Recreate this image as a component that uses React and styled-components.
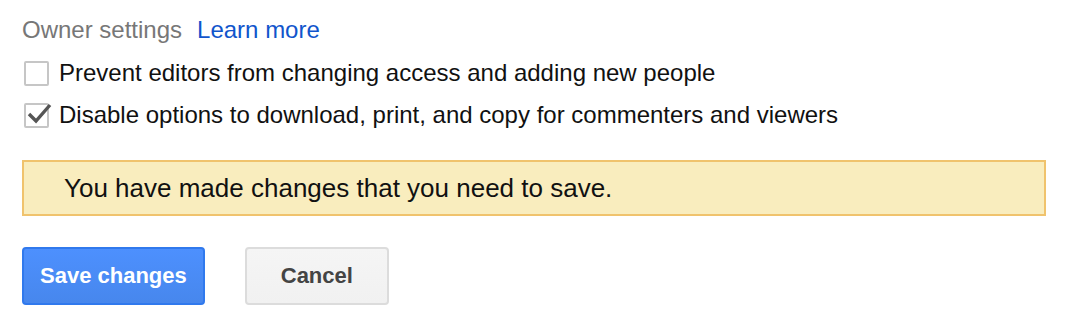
import React, { useState } from "react";
import styled, { createGlobalStyle } from "styled-components";

const GlobalStyle = createGlobalStyle`
	body {
		margin: 0;
		background: #ffffff;
		font-family: "Liberation Sans", Arial, sans-serif;
	}
`;

const Page = styled.div`
	padding: 14px 20px 0 22px;
`;

const Heading = styled.div`
	display: flex;
	align-items: baseline;
	gap: 15px;
	font-size: 24px;
	height: 32px;
	line-height: 32px;
`;

const HeadingLabel = styled.span`
	color: #777777;
`;

const LearnMore = styled.a`
	color: #1155cc;
	text-decoration: none;
	cursor: pointer;
`;

const OptionList = styled.div`
	display: flex;
	flex-direction: column;
	gap: 16px;
	margin-top: 14px;
`;

const Option = styled.label`
	display: flex;
	align-items: center;
	gap: 10px;
	font-size: 24px;
	color: #111111;
	height: 26px;
	cursor: pointer;
`;

const Box = styled.span`
	position: relative;
	width: 21px;
	height: 21px;
	margin-left: 2px;
	border: 2px solid #c6c6c6;
	border-radius: 2px;
	background: #ffffff;
	flex-shrink: 0;
`;

const Tick = styled.svg`
	position: absolute;
	left: -1px;
	top: -6px;
`;

const Notice = styled.div`
	margin-top: 32px;
	height: 56px;
	width: 1024px;
	box-sizing: border-box;
	display: flex;
	align-items: center;
	padding-left: 40px;
	background: #f9edbe;
	border: 2px solid #f0c36d;
	font-size: 26px;
	color: #111111;
`;

const Actions = styled.div`
	display: flex;
	gap: 40px;
	margin-top: 31px;
`;

const Button = styled.button`
	height: 58px;
	padding: 0 ${(p) => (p.$primary ? "16px" : "34px")};
	font-family: "Liberation Sans", Arial, sans-serif;
	font-size: 22px;
	font-weight: bold;
	border-radius: 4px;
	cursor: pointer;
	border: 2px solid ${(p) => (p.$primary ? "#3079ed" : "#dcdcdc")};
	color: ${(p) => (p.$primary ? "#ffffff" : "#444444")};
	background: ${(p) =>
		p.$primary
			? "linear-gradient(#4d90fe, #4787ed)"
			: "linear-gradient(#f5f5f5, #f1f1f1)"};
`;

function Checkbox({ checked, onChange, children }) {
	return (
		<Option onClick={onChange}>
			<Box>
				{checked && (
					<Tick width="28" height="28" viewBox="0 0 28 28">
						<path
							d="M4 15 L11 22 L25 6"
							fill="none"
							stroke="#555555"
							strokeWidth="3.4"
							strokeLinecap="butt"
						/>
					</Tick>
				)}
			</Box>
			{children}
		</Option>
	);
}

export default function App() {
	const [preventEditors, setPreventEditors] = useState(false);
	const [disableDownload, setDisableDownload] = useState(true);

	return (
		<>
			<GlobalStyle />
			<Page>
				<Heading>
					<HeadingLabel>Owner settings</HeadingLabel>
					<LearnMore>Learn more</LearnMore>
				</Heading>

				<OptionList>
					<Checkbox
						checked={preventEditors}
						onChange={() => setPreventEditors(!preventEditors)}
					>
						Prevent editors from changing access and adding new people
					</Checkbox>
					<Checkbox
						checked={disableDownload}
						onChange={() => setDisableDownload(!disableDownload)}
					>
						Disable options to download, print, and copy for commenters and viewers
					</Checkbox>
				</OptionList>

				<Notice>You have made changes that you need to save.</Notice>

				<Actions>
					<Button $primary>Save changes</Button>
					<Button>Cancel</Button>
				</Actions>
			</Page>
		</>
	);
}
